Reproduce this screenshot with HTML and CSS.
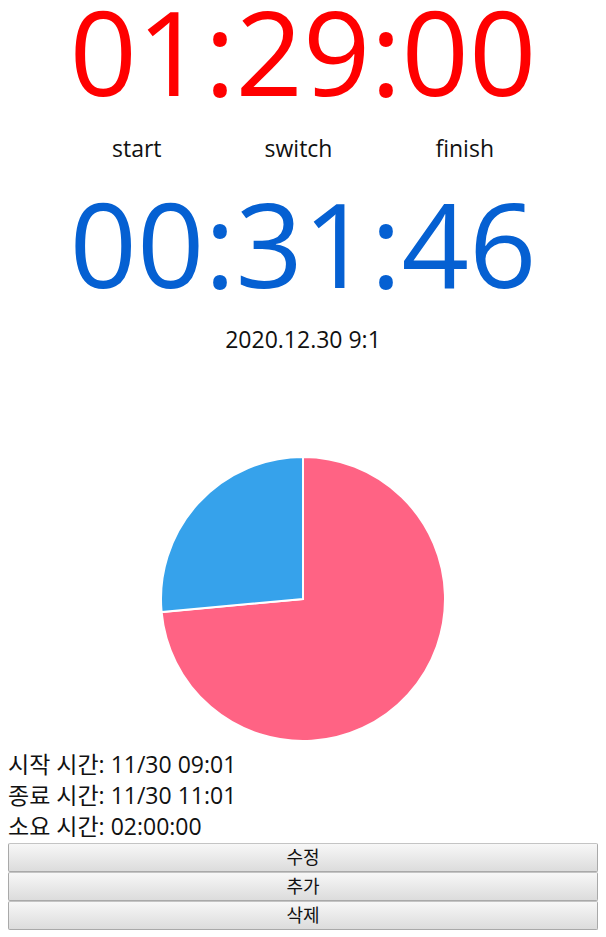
FILE: index.html
```html
<!DOCTYPE html>
<html lang="ko">
<head>
<meta charset="utf-8">
<title>Timer</title>
<link rel="stylesheet" href="styles.css">
</head>
<body>
<main class="page">
  <div class="clock clock-red">01:29:00</div>
  <div class="labels">
    <span>start</span>
    <span>switch</span>
    <span>finish</span>
  </div>
  <div class="clock clock-blue">00:31:46</div>
  <div class="date">2020.12.30 9:1</div>
  <div class="chart">
    <svg class="pie" width="290" height="290" viewBox="0 0 290 290">
      <path d="M145,145 L145,3 A142,142 0 1 1 3.61,158.12 Z" fill="#ff6384" stroke="#fff" stroke-width="2" stroke-linejoin="miter"/>
      <path d="M145,145 L3.61,158.12 A142,142 0 0 1 145,3 Z" fill="#36a2eb" stroke="#fff" stroke-width="2" stroke-linejoin="miter"/>
    </svg>
  </div>
  <div class="info">
    <div>시작 시간: 11/30 09:01</div>
    <div>종료 시간: 11/30 11:01</div>
    <div>소요 시간: 02:00:00</div>
  </div>
  <div class="buttons">
    <button class="btn">수정</button>
    <button class="btn">추가</button>
    <button class="btn">삭제</button>
  </div>
</main>
</body>
</html>
```
FILE: styles.css
```css
html, body {
  margin: 0;
  padding: 0;
  background: #fff;
}
body {
  font-family: "Open Sans", "Noto Sans CJK KR", sans-serif;
  color: #111;
}
.page {
  padding: 1px 8px 0;
}
.clock {
  font-size: 118px;
  line-height: 100px;
  height: 100px;
  text-align: center;
  white-space: nowrap;
}
.clock-red {
  color: #ff0000;
}
.clock-blue {
  color: #0560d2;
  margin-top: 30px;
}
.labels {
  margin-top: 32px;
  display: flex;
  justify-content: center;
  gap: 103px;
  font-size: 23px;
  line-height: 30px;
}
.date {
  margin-top: 31px;
  text-align: center;
  font-size: 23px;
  line-height: 30px;
}
.chart {
  margin-top: 100px;
  display: flex;
  justify-content: center;
}
.pie {
  display: block;
}
.info {
  margin-top: 5px;
  font-size: 23px;
  line-height: 31px;
}
.buttons {
  margin-top: 1px;
  display: flex;
  flex-direction: column;
}
.btn {
  display: block;
  width: 100%;
  height: 29px;
  margin: 0;
  padding: 0;
  border: 1px solid #a9a9a9;
  border-top-color: #c4c4c4;
  border-radius: 2px;
  background: linear-gradient(#f7f7f7, #dcdcdc);
  font-family: "Open Sans", "Noto Sans CJK KR", sans-serif;
  font-size: 18px;
  line-height: 27px;
  color: #111;
}
```
